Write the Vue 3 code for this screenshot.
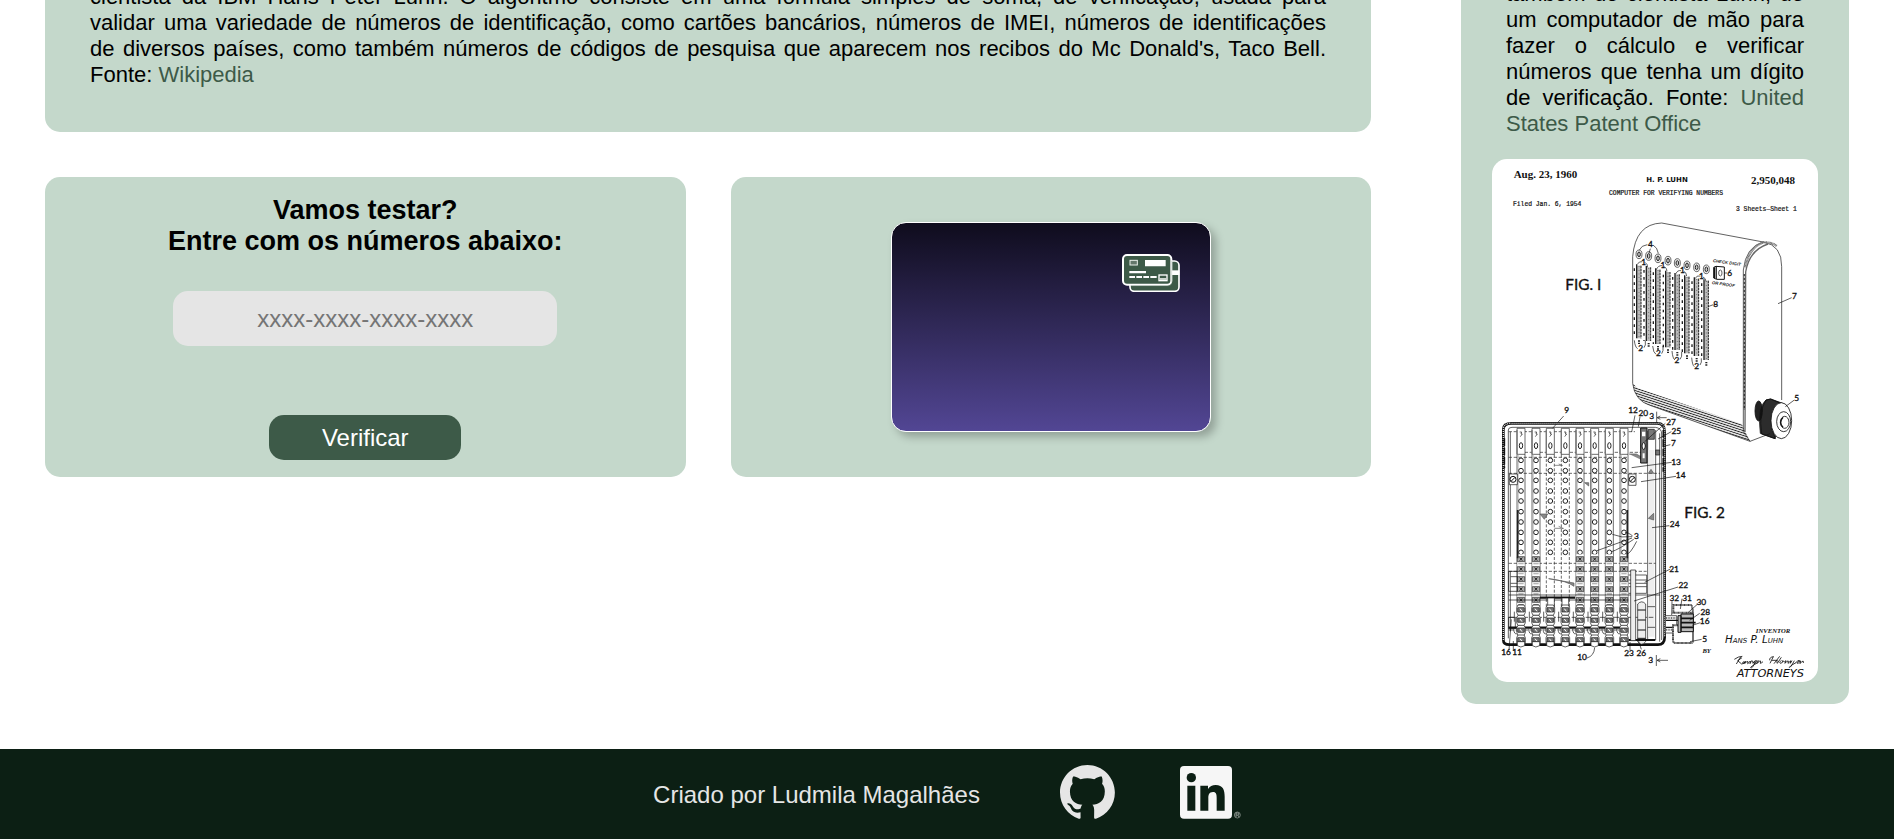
<script setup>
import { ref } from 'vue'

const number = ref('')

const aboutLines = [
  'cientista da IBM Hans Peter Luhn. O algoritmo consiste em uma fórmula simples de soma, de verificação, usada para',
  'validar uma variedade de números de identificação, como cartões bancários, números de IMEI, números de identificações',
  "de diversos países, como também números de códigos de pesquisa que aparecem nos recibos do Mc Donald's, Taco Bell."
]

// Front view of the device: one entry per dial, left to right
const slots = [
  { x: 477, top: 313, end: 565 },
  { x: 506, top: 318, end: 573 },
  { x: 534, top: 325, end: 582 },
  { x: 564, top: 332, end: 592 },
  { x: 592, top: 339, end: 600 },
  { x: 621, top: 346, end: 610 },
  { x: 650, top: 352, end: 618 },
  { x: 679, top: 358, end: 630 }
]

// Inner view: strips with holes above and gear blocks below
const strips = [123, 168, 211, 256, 300, 344, 388, 432]
const fullStrips = [123, 168, 300, 344, 388, 432]
const holes = [931, 962, 991, 1023, 1053, 1085, 1116, 1147, 1177, 1207]
const gears = [1228, 1258, 1288, 1318, 1350]
const lowGears = [1380, 1411, 1441, 1470]

const labels = [
  [511, 291, '4'], [749, 377, '6'], [707, 472, '8'], [943, 448, '7'],
  [950, 753, '5'], [260, 788, '9'], [459, 788, '12'], [490, 797, '20'],
  [515, 807, '3'], [573, 825, '27'], [589, 851, '25'], [580, 888, '7'],
  [588, 944, '13'], [602, 985, '14'], [584, 1132, '24'], [469, 1166, '3'],
  [582, 1265, '21'], [610, 1315, '22'], [583, 1353, '32'], [621, 1354, '31'],
  [664, 1366, '30'], [676, 1395, '28'], [674, 1422, '16'], [674, 1475, '5'],
  [78, 1515, '16'], [111, 1515, '11'], [306, 1530, '10'], [447, 1519, '23'],
  [484, 1519, '26'], [512, 1539, '3'], [482, 603, '2'], [535, 619, '2'],
  [591, 639, '2'], [650, 657, '2'], [491, 345, '1'], [549, 355, '1'],
  [607, 370, '1'], [664, 386, '1']
]
</script>

<template>
  <div class="page">
    <main class="content">
      <div class="primary">
        <section class="card about">
          <p>
            <span v-for="line in aboutLines" :key="line" class="line">{{ line }}</span>
            Fonte: <a href="#wikipedia">Wikipedia</a>
          </p>
        </section>

        <div class="pair">
          <form class="card tester" @submit.prevent>
            <h2><label for="card-number">Vamos testar?<br>Entre com os números abaixo:</label></h2>
            <input id="card-number" v-model="number" type="text" placeholder="xxxx-xxxx-xxxx-xxxx">
            <button type="submit">Verificar</button>
          </form>

          <section class="card preview">
            <div class="bank-card">
              <svg class="cards-icon" viewBox="0 0 174 114" aria-hidden="true">
                <rect x="24" y="21" width="147" height="91" rx="13" fill="#3d5a48" stroke="#fff" stroke-width="5" />
                <path d="M146 49h26v14h-26z" fill="#fff" />
                <rect x="3" y="3" width="145" height="89" rx="12" fill="#3d5a48" stroke="#fff" stroke-width="6" />
                <path d="M149 20v66q0 9-9 9H26" fill="none" stroke="#8a9a90" stroke-width="1" />
                <rect x="24" y="19" width="22" height="14" fill="#64776b" stroke="#e9eeea" stroke-width="3" />
                <path d="M69 18h62v19H69zM22 51h50v7H22zM22 66h17v6H22zM43 66h17v6H43zM64 66h17v6H64zM85 66h19v6H85z" fill="#fff" />
                <rect x="111" y="63" width="24" height="17" fill="#3d5a48" stroke="#fff" stroke-width="4" />
                <path d="M113 75h20" stroke="#e9eeea" stroke-width="5" />
              </svg>
            </div>
          </section>
        </div>
      </div>

      <aside class="card sidebar">
        <p>
          também do cientista Luhn, de um computador de mão para fazer o cálculo e verificar números que tenha um dígito de
          verificação. Fonte: <a href="#patent">United States Patent Office</a>
        </p>

        <svg class="patent" viewBox="36 27 978 1569" role="img" aria-label="Computer for verifying numbers">
          <defs>
            <pattern id="hatch" width="7" height="7" patternUnits="userSpaceOnUse" patternTransform="rotate(18)">
              <path d="M0 3.5h7" stroke="#222" stroke-width="3" />
            </pattern>
            <pattern id="knurl" width="4" height="4" patternUnits="userSpaceOnUse">
              <path d="M0 0l4 4M4 0L0 4" stroke="#111" stroke-width="1.6" />
            </pattern>
          </defs>
          <rect x="36" y="27" width="978" height="1569" fill="#fff" />

          <g fill="#111">
            <g font-family="'Liberation Serif', serif" font-weight="700" font-size="33">
              <text x="101" y="84">Aug. 23, 1960</text>
              <text x="813" y="101">2,950,048</text>
            </g>
            <text x="561" y="95" text-anchor="middle" font-family="'DejaVu Sans', sans-serif" font-weight="700" font-size="21">H. P. LUHN</text>
            <g font-family="'Liberation Mono', monospace" font-size="19" stroke="#111" stroke-width="0.6">
              <text x="558" y="134" text-anchor="middle">COMPUTER FOR VERIFYING NUMBERS</text>
              <text x="99" y="168">Filed Jan. 6, 1954</text>
              <text x="768" y="184">3 Sheets—Sheet 1</text>
            </g>
            <g font-family="Lato, sans-serif" font-size="46" stroke="#111" stroke-width="1">
              <text x="256" y="419">FIG. I</text>
              <text x="613" y="1105">FIG. 2</text>
            </g>
            <text x="879" y="1449" text-anchor="middle" font-family="'Liberation Serif', serif" font-style="italic" font-weight="700" font-size="20">INVENTOR</text>
            <text x="680" y="1508" text-anchor="middle" font-family="'Liberation Serif', serif" font-style="italic" font-weight="700" font-size="20">BY</text>
            <text x="735" y="1480" font-family="'DejaVu Sans', sans-serif" font-style="italic" font-variant="small-caps" font-size="31">Hans P. Luhn</text>
            <text x="770" y="1581" font-family="'DejaVu Sans', sans-serif" font-style="italic" font-size="34">ATTORNEYS</text>
            <g font-family="'Liberation Sans', sans-serif" font-weight="700" font-style="italic" font-size="13">
              <text x="698" y="336" transform="rotate(8 698 336)">CHECK DIGIT</text>
              <text x="695" y="402" transform="rotate(8 695 402)">OR PROOF</text>
            </g>
            <g font-family="Lato, sans-serif" font-size="25" text-anchor="middle">
              <text v-for="(l, i) in labels" :key="i" :x="l[0]" :y="l[1]" stroke="#111" stroke-width="1">{{ l[2] }}</text>
            </g>
          </g>

          <!-- Perspective view of the housing -->
          <g fill="none" stroke="#111" stroke-width="2">
            <path d="M458 700V320Q466 222 545 219L850 276Q906 286 905 350V750" />
            <path d="M850 276Q797 290 790 360V845L810 874L870 851" />
            <path d="M864 282Q808 300 797 366L795 845" stroke-width="4" stroke="#666" />
            <path d="M890 288Q877 277 850 277Q808 292 795 352" stroke-width="7" stroke="#777" stroke-dasharray="3 1" />
            <path d="M458 700Q464 752 510 766L810 874" />
            <path d="M458 700Q464 752 510 766L810 874L785 822L472 714Z" fill="url(#hatch)" stroke="none" />
            <path d="M793 372V780" stroke-width="4" stroke-dasharray="2 2" />
          </g>

          <!-- Knob -->
          <g fill="#fff" stroke="#111" stroke-width="2.5">
            <ellipse cx="836" cy="783" rx="11" ry="30" fill="#222" />
            <path d="M858 750Q832 770 841 850L885 866L908 760L872 747Z" fill="url(#knurl)" />
            <path d="M858 750Q835 785 845 852L886 866Q858 812 899 759L872 747Z" fill="#111" fill-opacity=".45" />
            <ellipse cx="904" cy="812" rx="31" ry="54" />
            <ellipse cx="911" cy="815" rx="21" ry="30" />
            <ellipse cx="914" cy="817" rx="13" ry="18" />
            <path d="M909 802q-14 16 0 29" fill="none" stroke-width="4" />
          </g>

          <!-- Dials and number slots -->
          <g stroke="#222">
            <g v-for="(s, i) in slots" :key="i">
              <ellipse :cx="s.x" :cy="s.top" rx="9" ry="13" fill="#eee" stroke-width="2" />
              <ellipse :cx="s.x" :cy="s.top" rx="4" ry="7" fill="#ccc" stroke-width="3" />
              <path :d="`M${s.x} ${s.top + 34}V${s.end}`" stroke="#bbb" stroke-width="13" />
              <path :d="`M${s.x - 7} ${s.top + 30}V${s.end}`" stroke-width="4" />
              <path :d="`M${s.x + 6} ${s.top + 34}V${s.end}`" stroke-width="3" stroke-dasharray="7 2" />
              <path :d="`M${s.x} ${s.top + 36}V${s.end}`" stroke-width="2" stroke-dasharray="2 9" />
              <path :d="`M${s.x - 14} ${s.top + 42}V${s.end}`" stroke-width="4" stroke-dasharray="8 13" />
              <path :d="`M${s.x} ${s.end + 6}v12`" stroke-width="6" stroke-dasharray="4 3" />
            </g>
          </g>
          <g fill="none" stroke="#111" stroke-width="2">
            <path d="M502 284Q484 286 478 300M519 285Q532 292 535 310M511 296l-4 14" />
            <path d="M472 343Q477 333 487 335M495 337Q503 342 503 352M529 359Q534 346 546 347M553 350Q561 354 561 364M588 371Q592 360 603 362M611 364Q619 366 620 378M645 386Q650 375 661 378M669 381Q677 384 678 394" />
            <path d="M463 571Q465 592 473 596M492 593Q498 587 496 572M518 588Q520 609 528 613M545 611Q551 604 549 588M576 603Q578 626 585 630M600 628Q607 621 605 606M635 623Q637 646 643 650M660 645Q666 638 664 625" />
            <path d="M708 349l-7 3v32l9 4h23v-37zM709 349v38" stroke-width="3" />
            <ellipse cx="721" cy="369" rx="5" ry="9" />
            <path d="M733 369h8M684 470l16-6M894 461l41-18M916 770l27-20M213 840l38-42" />
            <path d="M704 352v32" stroke-width="4" />
          </g>

          <!-- Sectional view, outer case -->
          <g fill="none" stroke="#111">
            <path d="M70 1470V838Q70 820 94 820H532Q554 820 554 845V1462Q554 1484 534 1484H88Q70 1484 70 1470Z" stroke-width="8" />
            <path d="M70 1470V838Q70 820 94 820H532Q554 820 554 845V1462" stroke="#ddd" stroke-width="4" stroke-dasharray="3 3" />
            <path d="M85 1465V840Q85 832 96 832H526Q545 834 545 852V1470M539 850V1475M527 840V1470M503 842V1470M91 845V1220" stroke-width="2" />
            <path d="M505 900h18v560h-18z" fill="#eee" stroke="none" />
            <path d="M550 840v125M73 865v90" stroke-width="5" stroke-dasharray="23 5" />
          </g>

          <g stroke="#222" stroke-width="2">
            <path d="M86 845H465M119 907H484M86 922H445M86 970H540M86 1240H527M86 1264H500" fill="none" stroke-dasharray="10 5" />
            <g v-for="x in strips" :key="x">
              <path :d="`M${x - 12} 835h24v78h-24z`" fill="#fff" />
              <path :d="`M${x - 12} 840v73`" stroke="#777" stroke-width="4" />
              <ellipse :cx="x" cy="887" rx="5" ry="9" fill="#fff" stroke-width="3" />
              <path :d="`M${x - 4} 846h6l-2 6h4l-6 8`" fill="none" />
              <path :d="`M${x - 12} 913V1370M${x + 12} 913V1370`" :stroke-dasharray="x === 211 || x === 256 ? '9 5' : 'none'" />
              <path v-if="x !== 211 && x !== 256" :d="`M${x - 9} 913V1220`" stroke="#aaa" stroke-width="3" />
              <circle v-for="y in holes" :key="y" :cx="x" :cy="y" r="7" fill="#fff" stroke-width="3" />
            </g>
            <g v-for="x in fullStrips" :key="'g' + x">
              <g v-for="y in gears" :key="y">
                <path :d="`M${x - 11} ${y - 15}h22v30h-22z`" fill="#fff" stroke="none" />
                <path :d="`M${x - 11} ${y - 8}h22v15h-22z`" fill="#aaa" />
                <path :d="`M${x - 4} ${y - 5}l8 9M${x + 4} ${y - 5}l-8 9`" stroke-width="3" />
                <path :d="`M${x - 8} ${y + 14}h16`" />
              </g>
            </g>
            <path d="M113 1080v145M442 1080v145" stroke-width="5" />
          </g>

          <!-- Shaft and lower gears -->
          <g fill="none" stroke="#111">
            <path d="M86 1335H540M86 1350H445" stroke-width="2" />
            <path d="M180 1343H285M86 1433H420" stroke-width="7" />
            <path d="M86 1402H520M86 1440H430" stroke-width="2" stroke-dasharray="16 5" />
            <path d="M86 1264h26v60H86zM91 1264v180M86 1402h20v34H86zM446 1275h54v55h-54M446 1290h54M446 1300h54M446 1310h54M92 1280h20M92 1300h20M92 1310h20" stroke-width="2" />
            <path d="M203 1344h20v28h-20zM246 1344h20v28h-20z" fill="#fff" stroke-width="2" />
            <g v-for="x in strips" :key="'b' + x">
              <g v-for="y in lowGears" :key="y">
                <path :d="`M${x - 9} ${y - 15}h18l4 8v14l-4 9h-18l-4-9v-14z`" fill="#fff" stroke-width="2" />
                <path :d="`M${x - 10} ${y - 7}h20v13h-20z`" fill="#777" stroke-width="2" />
                <path :d="`M${x - 3} ${y - 4}l6 8`" stroke="#fff" stroke-width="3" />
              </g>
              <path :d="`M${x - 11} 1475v12q10 8 22 0v-12zM${x - 22} 1436q1 19 11 15M${x - 20} 1385v30`" fill="#fff" stroke-width="2" />
            </g>
            <path d="M473 1362q12-13 24 0v113q-12 15-24 0z" fill="#eee" stroke-width="2" />
            <path d="M473 1380h24M473 1410h24M473 1440h24M473 1465h24" stroke-width="3" />
            <path d="M446 1470h80" stroke-width="6" />
            <path d="M503 1370h22M503 1432h22" stroke-width="2" />
            <path d="M452 1260h15v212h-15z" fill="#eee" stroke-width="2" />
            <path d="M206 1286l76 13v10q-20-16-76-23zM223 946h24M236 942l12 5M223 1135h28M236 1129l14 7M314 998l12 0 0 10zM180 1092h23l-10 16zM505 1105l16-15v20zM505 970l8-12 8 12zM447 912h22l14 8v9" fill="#888" stroke="#555" stroke-width="2" />
          </g>

          <!-- Side screws and check-digit column -->
          <g fill="#fff" stroke="#111" stroke-width="3">
            <path d="M88 972h24v32H88zM446 972h22v34h-22z" stroke-width="2" />
            <circle cx="99" cy="988" r="9" /><circle cx="457" cy="988" r="9" />
            <path d="M93 994l12-12M451 994l12-12" />
            <path d="M482 834h19v105h-19z" fill="#777" />
            <ellipse cx="491" cy="888" rx="5" ry="10" />
            <path d="M486 845h10v14h-10zM488 910h6v15h-6z" stroke="none" />
            <path d="M505 838h18v30h-18zM527 900h12v15h-12z" fill="#777" stroke-width="2" />
          </g>

          <!-- Crank assembly -->
          <g fill="#fff" stroke="#111" stroke-width="3">
            <path d="M556 1397h34v52h-34z" stroke-width="2" />
            <path d="M558 1404h40M558 1439h40" stroke="#777" stroke-width="6" stroke-dasharray="3 2" />
            <path d="M558 1411h40M558 1432h40" stroke-width="4" />
            <path d="M580 1365h55l4 20v88q0 6-8 6h-44q-8 0-8-8v-45h56v-38h-55z" stroke="#444" stroke-width="6" stroke-dasharray="3 1" />
            <path d="M594 1397h9v50h-9zM603 1392h37v53h-37z" fill="#bbb" />
            <path d="M603 1405h37M603 1418h44M603 1432h37" stroke-width="5" />
          </g>

          <g fill="none" stroke="#111" stroke-width="2">
            <path d="M530 785v33M560 803h-27M541 798l-10 5 10 5M529 1515v33M564 1531h-32M541 1526l-10 5 10 5" />
            <path d="M465 796l-10 50M480 800l-5 30M556 820l-62 55M574 845l-40 22M571 884l-20 5M575 937l-120 16M588 979l-105 16M568 1127l-52 6M456 1160Q425 1165 397 1153M456 1164L351 1202M458 1158Q443 1146 435 1148M461 1168Q415 1199 395 1205M470 1174Q450 1213 440 1212" />
            <path d="M571 1257l-77 40M594 1311l-132 42M576 1354l-1 41M606 1346l-5 31M652 1363l-28 25M659 1390l-30 21M661 1418l-24 8M665 1468l-35 7M87 1500l7-92M100 1500v-27M321 1524Q342 1518 344 1493M450 1500v-24M484 1498l-10-30" />
            <path d="M763 1528q12-9 24-9M782 1521l-13 21M786 1523l-13 9l12 10q7-1 10-6q-6-3-7 3q3 4 9-5l-3 7q7-9 10-6l-1 6q6-5 8-8l-1 8 5-9q4-1 4 8q3-7 8-8q-8 8-3 8q7 0 4-8q3 4 7 0l-3 8q7-10 10-7l-1 7q4-1 8-5M826 1536q-9 21-14 17q0-4 20-14M869 1531q-1-10 12-11M880 1520l-10 20M899 1519l-17 22M876 1531h16q-3 6 0 9l12-18M904 1531q-8 8-2 9q8-2 6-8q5 7 10 0l-3 8q7-9 10-7l-1 7q5-3 8-8l-1 8 5-8M943 1532q-12 23-15 20q2-5 20-14q5-8 9-6q-10 9-3 8q8-3 3-8l5 1-2 8q7-10 10-7v5" stroke-width="2.5" />
          </g>
        </svg>
      </aside>
    </main>

    <footer class="footer">
      <span>Criado por Ludmila Magalhães</span>
      <a class="github" href="#github" aria-label="GitHub">
        <svg viewBox="0 0 98 96" fill="#e6e6e6" aria-hidden="true">
          <path fill-rule="evenodd" d="M48.9 0C21.8 0 0 22 0 49.2c0 21.8 14 40.2 33.4 46.7 2.4.5 3.3-1.1 3.3-2.4 0-1.1-.1-5.1-.1-9.1-13.6 2.9-16.4-5.9-16.4-5.9-2.2-5.7-5.4-7.2-5.4-7.2-4.5-3 .3-3 .3-3 4.9.3 7.5 5.1 7.5 5.1 4.4 7.5 11.4 5.4 14.2 4.1.4-3.2 1.7-5.4 3.1-6.6-10.8-1.1-22.2-5.4-22.2-24.3 0-5.4 1.9-9.8 5-13.2-.5-1.2-2.2-6.3.5-13 0 0 4.1-1.3 13.4 5a46.4 46.4 0 0 1 24.4 0c9.3-6.3 13.4-5 13.4-5 2.7 6.8 1 11.8.5 13 3.2 3.4 5 7.8 5 13.2 0 18.9-11.4 23.1-22.3 24.3 1.8 1.5 3.3 4.5 3.3 9.1 0 6.6-.1 11.9-.1 13.5 0 1.3.9 2.9 3.3 2.4C83.8 89.4 97.8 71 97.8 49.2 97.8 22 75.9 0 48.9 0z" />
        </svg>
      </a>
      <a class="linkedin" href="#linkedin" aria-label="LinkedIn">
        <svg viewBox="0 0 183 159" aria-hidden="true">
          <rect width="156" height="158" rx="12" fill="#f6f6f6" />
          <g fill="#0c1f14">
            <circle cx="34" cy="35" r="14" />
            <path d="M22 59h24v75H22zM61 59h23v10c5-8 13-12 23-12 22 0 27 15 27 35v42h-24V97c0-11-1-19-11-19-12 0-14 9-14 19v37H61z" />
          </g>
          <circle cx="172" cy="147" r="9" fill="none" stroke="#a3aaa5" stroke-width="2" />
          <path d="M168 153v-12h5q4 0 4 3t-4 3h-5M173 147l4 6" fill="none" stroke="#c0c5c1" stroke-width="2" />
        </svg>
      </a>
    </footer>
  </div>
</template>

<style>
body {
  margin: 0;
  background: #fff;
}
</style>

<style scoped>
.page {
  overflow: hidden;
  font-family: "Liberation Sans", Arial, sans-serif;
  font-size: 22px;
  line-height: 26px;
  color: #000;
}

.content {
  display: grid;
  grid-template-columns: minmax(0, 1fr) 388px;
  gap: 90px;
  margin-top: -62px;
  padding: 0 45px 45px;
}

.primary {
  display: flex;
  flex-direction: column;
  gap: 45px;
}

.card {
  box-sizing: border-box;
  border-radius: 15px;
  background: #c4d8cb;
}

.card p {
  margin: 0;
  text-align: justify;
}

.card a {
  color: #3d5a48;
  text-decoration: none;
}

.about {
  padding: 46px 45px 44px;
}

.line {
  display: block;
  text-align-last: justify;
}

.pair {
  display: grid;
  grid-template-columns: 1fr 1fr;
  gap: 45px;
}

.tester {
  display: flex;
  flex-direction: column;
  align-items: center;
  padding: 18px 0 17px;
}

.tester h2 {
  margin: 0 0 34px;
  font-size: 27px;
  line-height: 31px;
  text-align: center;
}

.tester input {
  box-sizing: border-box;
  width: 60%;
  height: 55px;
  margin-bottom: 69px;
  padding: 0 15px;
  border: 0;
  border-radius: 15px;
  background: #e5e5e5;
  font: inherit;
  font-size: 24px;
  text-align: center;
}

.tester input::placeholder {
  color: #757575;
}

.tester button {
  width: 30%;
  height: 45px;
  padding: 0;
  border: 0;
  border-radius: 15px;
  background: #3d5a48;
  color: #fff;
  font: inherit;
  font-size: 24px;
}

.preview {
  display: flex;
  align-items: center;
  justify-content: center;
}

.bank-card {
  box-sizing: border-box;
  display: flex;
  align-items: flex-start;
  justify-content: flex-end;
  width: 50%;
  height: 210px;
  padding: 31px 30px;
  border: 1px solid #fff;
  border-radius: 15px;
  background: linear-gradient(#0f0c1d, #524694);
  box-shadow: 5px 5px 8px rgba(0, 0, 0, 0.25);
}

.cards-icon {
  width: 58px;
  height: 38px;
}

.sidebar {
  display: flex;
  flex-direction: column;
  padding: 43px 31px 22px;
}

.sidebar p {
  padding: 0 14px;
}

.patent {
  display: block;
  width: 100%;
  margin-top: 22px;
  border-radius: 15px;
}

.footer {
  box-sizing: border-box;
  display: flex;
  align-items: center;
  justify-content: center;
  height: 90px;
  padding-top: 2px;
  background: #0c1f14;
  color: #e5e5e5;
  font-size: 24px;
}

.footer a,
.footer svg {
  display: block;
}

.footer a {
  margin-bottom: 6px;
}

.github {
  width: 55px;
  margin: 0 65px 0 80px;
}

.linkedin {
  width: 61px;
}
</style>
